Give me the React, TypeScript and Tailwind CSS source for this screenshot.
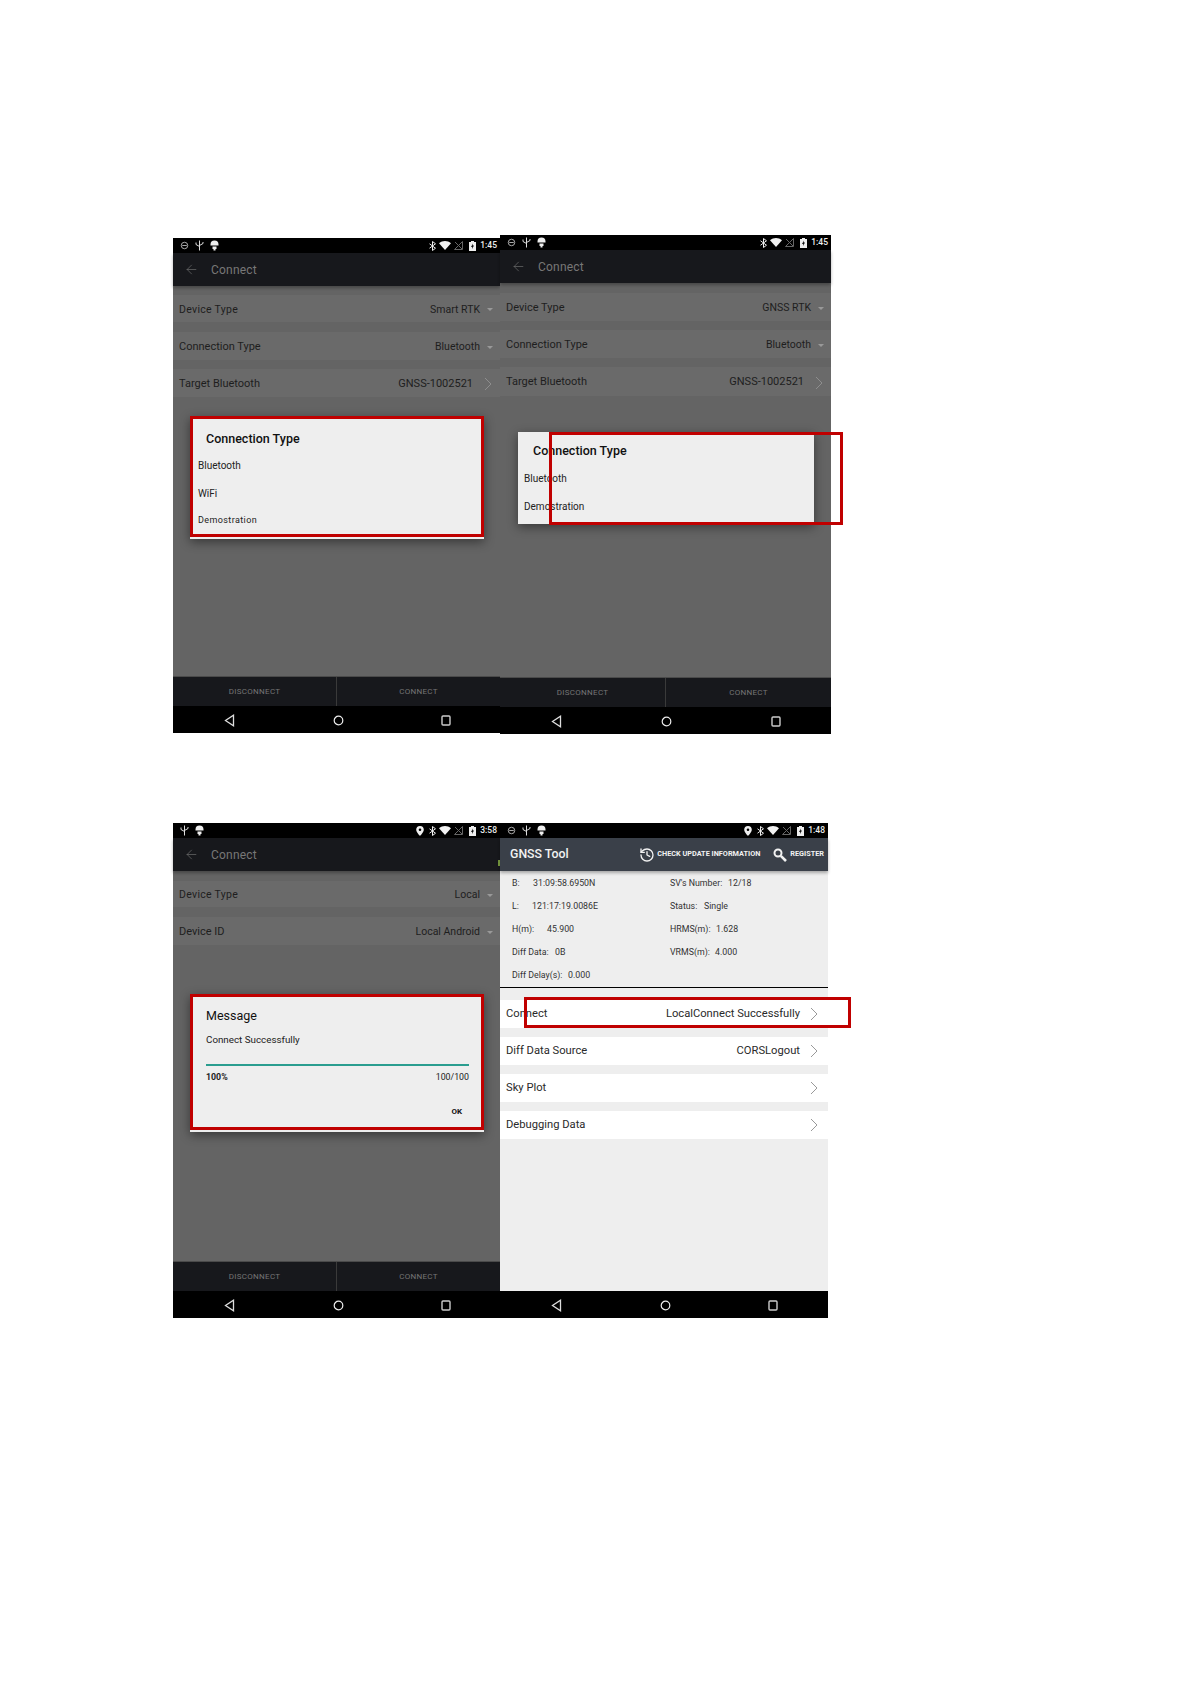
import React from 'react'
import { ArrowLeft, History } from 'lucide-react'

function SyncIcon() {
  return (
    <svg width="9" height="9" viewBox="0 0 10 10" fill="none" stroke="#bbb" strokeWidth="1">
      <circle cx="5" cy="5" r="3.6" />
      <path d="M2.5 5h5" />
    </svg>
  )
}

function UsbIcon() {
  return (
    <svg width="9" height="11" viewBox="0 0 9 11" fill="none" stroke="#ddd" strokeWidth="1">
      <path d="M4.5 0.5v10M1 2.5v2l3.5 2M8 2v1.5l-3.5 2" />
    </svg>
  )
}

function BugIcon() {
  return (
    <svg width="9" height="11" viewBox="0 0 9 11" fill="#eee">
      <path d="M0.5 4.5a4 4 0 0 1 8 0v1h-8zM2.5 6.500h4v2.500h-1v1.500h-2V9h-1z" />
    </svg>
  )
}

function PinIcon() {
  return (
    <svg className="mr-[2px]" width="8" height="10" viewBox="0 0 8 10">
      <path fillRule="evenodd" fill="#eee" d="M4 0a3.800 3.800 0 0 1 3.800 3.800C7.800 6.400 4 10 4 10S.2 6.400.2 3.800A3.800 3.800 0 0 1 4 0zm0 2.500a1.300 1.300 0 1 0 0 2.600 1.300 1.300 0 0 0 0-2.600z" />
    </svg>
  )
}

function BluetoothIcon() {
  return (
    <svg width="7" height="10" viewBox="0 0 7 10" fill="none" stroke="#eee" strokeWidth="1">
      <path d="M0.5 2.800l6 4.400-3 2.300V.5l3 2.300-6 4.400" />
    </svg>
  )
}

function WifiIcon() {
  return (
    <svg width="12" height="9" viewBox="0 0 12 9" fill="#f2f2f2">
      <path d="M0 2.200C3.500-.7 8.500-.7 12 2.200L6 9z" />
    </svg>
  )
}

function NoSimIcon() {
  return (
    <svg width="9" height="9" viewBox="0 0 9 9" fill="none" stroke="#666" strokeWidth="1">
      <path d="M8.500.5v8h-8zM1 1l7 7" />
    </svg>
  )
}

function BatteryIcon() {
  return (
    <svg className="ml-[3px] mr-[1px]" width="7" height="10" viewBox="0 0 7 10">
      <path fill="#eee" d="M2 0h3v1h2v9H0V1h2z" />
      <path fill="#111" d="M4 2.500L2 6h1.200L3 8l2-3.500H3.800z" />
    </svg>
  )
}

function StatusBar({ time, left, pin }: { time: string; left: React.ReactNode; pin?: boolean }) {
  return (
    <div className="flex h-[15px] shrink-0 items-center bg-black pl-[6.500px] pr-[3px]">
      <div className="flex items-center gap-[6px]">{left}</div>
      <div className="ml-auto flex items-center gap-[3px]">
        {pin && <PinIcon />}
        <BluetoothIcon />
        <WifiIcon />
        <NoSimIcon />
        <BatteryIcon />
        <span className="text-[8.500px] font-medium leading-none text-[#eeeeee]">{time}</span>
      </div>
    </div>
  )
}

function AppBar() {
  return (
    <div className="flex h-[33px] shrink-0 items-center bg-[#17181c] pl-[11px] shadow-[0_2px_3px_rgba(0,0,0,0.3)]">
      <ArrowLeft size={15} strokeWidth={1} className="text-[#777777]" />
      <span className="ml-[12px] text-[12px] tracking-[0.2px] text-[#777777]">Connect</span>
    </div>
  )
}

function Chevron({ className }: { className: string }) {
  return (
    <svg className={className} width="8" height="14" viewBox="0 0 8 14" fill="none" stroke="currentColor" strokeWidth="1">
      <path d="M1 1l6 6-6 6" />
    </svg>
  )
}

function DimRow({ label, value, caret, className }: { label: string; value: string; caret?: boolean; className: string }) {
  return (
    <div className={`flex shrink-0 items-center bg-[#6a6a6a] pl-[6px] pt-[2px] text-[#1e1e1e] ${className}`}>
      <span>{label}</span>
      {caret ? (
        <>
          <span className="ml-auto text-[10.500px] tracking-normal">{value}</span>
          <span className="ml-[7px] mr-[7px] h-0 w-0 border-x-[3.500px] border-t-[3px] border-x-transparent border-t-[#999999]" />
        </>
      ) : (
        <>
          <span className="ml-auto">{value}</span>
          <Chevron className="ml-[11px] mr-[8px] text-[#8e8e8e]" />
        </>
      )}
    </div>
  )
}

function BottomBars({ divider }: { divider: string }) {
  return (
    <div className="mt-auto flex h-[30px] shrink-0 border-t border-[#4a4a4a] bg-[#17181c] text-[8px] tracking-[0.3px] text-[#757575]">
      <div className={`flex items-center justify-center border-r border-[#3a3a3a] ${divider}`}>DISCONNECT</div>
      <div className="flex flex-1 items-center justify-center">CONNECT</div>
    </div>
  )
}

function NavBar({ className }: { className: string }) {
  return (
    <div className={`flex h-[27px] shrink-0 items-center justify-between bg-black pt-[1px] ${className}`}>
      <svg width="11" height="13" viewBox="0 0 11 13" fill="none" stroke="#dddddd" strokeWidth="1.300">
        <path d="M9.500 1.200v10.600L1.500 6.500z" />
      </svg>
      <svg width="11" height="11" viewBox="0 0 11 11" fill="none" stroke="#eeeeee" strokeWidth="1.200">
        <circle cx="5.500" cy="5.500" r="4.300" />
      </svg>
      <svg width="10" height="11" viewBox="0 0 10 11" fill="none" stroke="#cccccc" strokeWidth="1.400">
        <rect x="1" y="1" width="8" height="9" rx="1" />
      </svg>
    </div>
  )
}

function RedBox({ className }: { className: string }) {
  return <div className={`pointer-events-none absolute border-[3px] border-[#c00000] ${className}`} />
}

function InfoCell({ label, value, labelWidth }: { label: string; value: string; labelWidth: string }) {
  return (
    <div className="flex items-center text-[8.800px] text-[#333333]">
      <span className={labelWidth}>{label}</span>
      <span>{value}</span>
    </div>
  )
}

function ToolRow({ label, value }: { label: string; value?: string }) {
  return (
    <div className="flex h-[28px] shrink-0 items-center bg-white pl-[6px] text-[11.200px] text-[#2a2a2a]">
      <span>{label}</span>
      <span className="ml-auto">{value}</span>
      <Chevron className="ml-[10px] mr-[10px] text-[#999999]" />
    </div>
  )
}

export default function App() {
  return (
    <div className="min-h-[1684px] bg-white pl-[173px] pt-[235px] font-['Roboto',sans-serif]">
      <div className="flex">
        {/* smart rtk */}
        <div className="relative mt-[3px] flex h-[495px] w-[327px] flex-col bg-[#646464]">
          <StatusBar time="1:45" left={<><SyncIcon /><UsbIcon /><BugIcon /></>} />
          <AppBar />
          <DimRow label="Device Type" value="Smart RTK" caret className="mt-[9px] h-[27px] text-[10.500px] tracking-[0.3px]" />
          <DimRow label="Connection Type" value="Bluetooth" caret className="mt-[10px] h-[28px] text-[11px]" />
          <DimRow label="Target Bluetooth" value="GNSS-1002521" className="mt-[9px] h-[28px] text-[11px]" />
          <div className="absolute left-[17px] top-[178px] h-[123px] w-[294px] bg-[#eeeeee] shadow-[0_3px_10px_rgba(0,0,0,0.45)]">
            <div className="pl-[16px] pt-[14px] text-[12.500px] font-medium leading-[18px] text-[#111111]">Connection Type</div>
            <div className="mt-[3px] pl-[8px] text-[10px] text-[#222222]">
              <div className="flex h-[28px] items-center">Bluetooth</div>
              <div className="flex h-[28px] items-center">WiFi</div>
              <div className="flex h-[28px] items-center text-[9px] tracking-[0.4px]">Demostration</div>
            </div>
          </div>
          <RedBox className="left-[17px] top-[178px] h-[121px] w-[294px]" />
          <BottomBars divider="w-[164px]" />
          <NavBar className="pl-[51px] pr-[49px]" />
        </div>

        {/* gnss rtk */}
        <div className="relative flex h-[499px] w-[331px] flex-col bg-[#646464]">
          <StatusBar time="1:45" left={<><SyncIcon /><UsbIcon /><BugIcon /></>} />
          <AppBar />
          <DimRow label="Device Type" value="GNSS RTK" caret className="mt-[10px] h-[28px] text-[11px]" />
          <DimRow label="Connection Type" value="Bluetooth" caret className="mt-[9px] h-[28px] text-[11px]" />
          <DimRow label="Target Bluetooth" value="GNSS-1002521" className="mt-[9px] h-[29px] text-[11px]" />
          <div className="absolute left-[18px] top-[197px] h-[92px] w-[296px] bg-[#eeeeee] shadow-[0_3px_10px_rgba(0,0,0,0.45)]">
            <div className="pl-[15px] pt-[10px] text-[12.500px] font-medium leading-[18px] text-[#111111]">Connection Type</div>
            <div className="mt-[4px] pl-[6px] text-[10px] text-[#222222]">
              <div className="flex h-[28px] items-center">Bluetooth</div>
              <div className="flex h-[28px] items-center">Demostration</div>
            </div>
          </div>
          <RedBox className="left-[49px] top-[197px] h-[93px] w-[294px]" />
          <BottomBars divider="w-[166px]" />
          <NavBar className="pl-[51px] pr-[50px]" />
        </div>
      </div>

      <div className="mt-[89px] flex">
        {/* local */}
        <div className="relative flex h-[495px] w-[327px] flex-col bg-[#646464]">
          <StatusBar time="3:58" pin left={<><UsbIcon /><BugIcon /></>} />
          <AppBar />
          <DimRow label="Device Type" value="Local" caret className="mt-[10px] h-[26px] text-[10.500px] tracking-[0.3px]" />
          <DimRow label="Device ID" value="Local Android" caret className="mt-[10px] h-[28px] text-[11px]" />
          <div className="absolute left-[17px] top-[171px] h-[138px] w-[294px] bg-[#eeeeee] shadow-[0_3px_10px_rgba(0,0,0,0.45)]">
            <div className="pl-[16px] pt-[13px] text-[12.500px] leading-[18px] text-[#111111]">Message</div>
            <div className="mt-[8px] pl-[16px] text-[9.800px] leading-[14px] text-[#222222]">Connect Successfully</div>
            <div className="ml-[16px] mt-[17px] h-[2px] w-[263px] bg-[#2a9d8f]" />
            <div className="ml-[16px] mt-[6px] flex w-[263px] items-center justify-between text-[8.800px] leading-[10px] text-[#222222]">
              <span className="font-bold">100%</span>
              <span>100/100</span>
            </div>
            <div className="mt-[25px] pr-[22px] text-right text-[8px] font-bold leading-[10px] text-[#111111]">OK</div>
          </div>
          <RedBox className="left-[17px] top-[171px] h-[136px] w-[294px]" />
          <BottomBars divider="w-[164px]" />
          <NavBar className="pl-[51px] pr-[49px]" />
        </div>

        {/* gnss tool */}
        <div className="relative flex h-[495px] w-[328px] flex-col bg-[#eeeeee]">
          <div className="absolute -left-[2px] top-[37px] h-[6px] w-[2px] bg-[#6f8f3a]" />
          <StatusBar time="1:48" pin left={<><SyncIcon /><UsbIcon /><BugIcon /></>} />
          <div className="flex h-[33px] shrink-0 items-center bg-[#3a4049] pl-[10px] pr-[4px] shadow-[0_2px_3px_rgba(0,0,0,0.3)]">
            <span className="text-[12.300px] font-medium text-[#f2f2f2]">GNSS Tool</span>
            <History size={16} strokeWidth={2} className="ml-auto text-[#f2f2f2]" />
            <span className="ml-[2px] text-[7.300px] font-bold text-[#f2f2f2]">CHECK UPDATE INFORMATION</span>
            <svg className="ml-[13px]" width="14" height="14" viewBox="0 0 14 14" fill="none" stroke="#f2f2f2">
              <circle cx="5" cy="5" r="3.500" strokeWidth="2" />
              <path d="M7.800 7.800L13 13" strokeWidth="2.600" />
            </svg>
            <span className="ml-[3px] text-[7.300px] font-bold text-[#f2f2f2]">REGISTER</span>
          </div>
          <div className="grid h-[117px] shrink-0 grid-cols-[158px_1fr] auto-rows-[23px] border-b border-black pl-[12px] pt-[1px]">
            <InfoCell label="B:" value="31:09:58.6950N" labelWidth="w-[21px]" />
            <InfoCell label="SV's Number:" value="12/18" labelWidth="w-[58px]" />
            <InfoCell label="L:" value="121:17:19.0086E" labelWidth="w-[20px]" />
            <InfoCell label="Status:" value="Single" labelWidth="w-[34px]" />
            <InfoCell label="H(m):" value="45.900" labelWidth="w-[35px]" />
            <InfoCell label="HRMS(m):" value="1.628" labelWidth="w-[46px]" />
            <InfoCell label="Diff Data:" value="0B" labelWidth="w-[43px]" />
            <InfoCell label="VRMS(m):" value="4.000" labelWidth="w-[45px]" />
            <InfoCell label="Diff Delay(s):" value="0.000" labelWidth="w-[56px]" />
          </div>
          <div className="mt-[12px] flex flex-col gap-[9px]">
            <ToolRow label="Connect" value="LocalConnect Successfully" />
            <ToolRow label="Diff Data Source" value="CORSLogout" />
            <ToolRow label="Sky Plot" />
            <ToolRow label="Debugging Data" />
          </div>
          <RedBox className="left-[24px] top-[174px] h-[31px] w-[327px]" />
          <NavBar className="mt-auto pl-[51px] pr-[50px]" />
        </div>
      </div>
    </div>
  )
}
